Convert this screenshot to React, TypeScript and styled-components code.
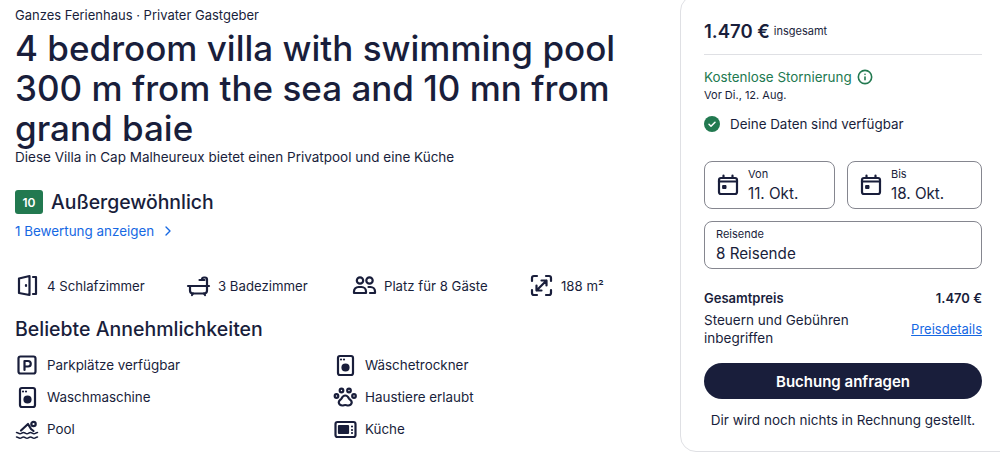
import React from "react";
import styled, { createGlobalStyle } from "styled-components";
import { ChevronRight, Info } from "lucide-react";

const ink = "#191e3b";
const green = "#227950";

const GlobalStyle = createGlobalStyle`
  html, body {
    margin: 0;
    background: #fff;
    overflow: hidden;
  }
  * { box-sizing: border-box; }
  body {
    font-family: "Inter", "Noto Sans", sans-serif;
    color: ${ink};
  }
`;

const Page = styled.div`
  width: 1000px;
  height: 455px;
  overflow: hidden;
  display: flex;
  align-items: flex-start;
`;

const Main = styled.main`
  width: 680px;
  flex: none;
  padding: 7px 40px 0 15px;
`;

const Eyebrow = styled.div`
  font-size: 13px;
  line-height: 17px;
`;

const Title = styled.h1`
  margin: 4px 0 0;
  font-size: 35px;
  line-height: 40px;
  font-weight: 500;
`;

const Lead = styled.p`
  margin: 1px 0 0;
  font-size: 13.5px;
  line-height: 17px;
`;

const RatingRow = styled.div`
  display: flex;
  align-items: center;
  gap: 8px;
  margin-top: 24px;
`;

const Badge = styled.span`
  width: 28px;
  height: 24px;
  border-radius: 3px;
  background: ${green};
  color: #fff;
  font-size: 12px;
  font-weight: 600;
  display: flex;
  align-items: center;
  justify-content: center;
`;

const RatingLabel = styled.span`
  font-size: 19.4px;
  font-weight: 500;
`;

const ReviewLink = styled.a`
  display: flex;
  align-items: center;
  gap: 6px;
  margin-top: 7px;
  height: 20px;
  font-size: 13.4px;
  color: #1668e3;
`;

const Facts = styled.div`
  display: flex;
  margin-top: 32px;
`;

const Fact = styled.div<{ $w: number }>`
  width: ${({ $w }) => $w}px;
  display: flex;
  align-items: center;
  gap: 7px;
  font-size: 13.2px;
`;

const SectionTitle = styled.h2`
  margin: 19px 0 0;
  font-size: 19.5px;
  line-height: 24px;
  font-weight: 500;
`;

const Amenities = styled.div`
  display: grid;
  grid-template-columns: 318px 1fr;
  grid-auto-rows: 32px;
  margin-top: 8px;
`;

const Amenity = styled.div`
  display: flex;
  align-items: center;
  gap: 7px;
  font-size: 13.4px;
`;

const IconSlot = styled.svg<{ $size?: number }>`
  width: ${({ $size }) => $size ?? 25}px;
  height: ${({ $size }) => $size ?? 25}px;
  flex: none;
  fill: none;
  stroke: ${ink};
  stroke-width: 2.2;
  stroke-linecap: round;
  stroke-linejoin: round;
`;

const Card = styled.aside`
  flex: none;
  width: 340px;
  height: 457px;
  margin-top: -5px;
  padding: 20px 37px 0 23px;
  border: 1px solid #dfe0e4;
  border-radius: 16px;
`;

const PriceRow = styled.div`
  display: flex;
  align-items: center;
  gap: 4px;
  height: 39px;
  padding-bottom: 8px;
  border-bottom: 1px solid #dfe0e4;
`;

const Price = styled.span`
  font-size: 18.5px;
  font-weight: 600;
`;

const PriceNote = styled.span`
  font-size: 11px;
`;

const Cancel = styled.div`
  display: flex;
  align-items: center;
  gap: 5px;
  margin-top: 13px;
  font-size: 13.4px;
  line-height: 18px;
  color: ${green};
`;

const CancelDate = styled.div`
  font-size: 11px;
  line-height: 18px;
`;

const Available = styled.div`
  display: flex;
  align-items: center;
  gap: 10px;
  margin-top: 11px;
  font-size: 13.4px;
  line-height: 18px;
`;

const DateRow = styled.div`
  display: flex;
  gap: 12px;
  margin-top: 28px;
`;

const Field = styled.div<{ $w?: number }>`
  width: ${({ $w }) => ($w ? `${$w}px` : "100%")};
  height: 48px;
  border: 1px solid #85868f;
  border-radius: 8px;
  display: flex;
  align-items: center;
  gap: 8px;
  padding: 0 11px;
`;

const FieldText = styled.div`
  display: flex;
  flex-direction: column;
  gap: 3px;
`;

const FieldLabel = styled.span`
  font-size: 11px;
  line-height: 14px;
`;

const FieldValue = styled.span`
  font-size: 15.2px;
  line-height: 20px;
`;

const Travelers = styled(Field)`
  margin-top: 12px;
`;

const TotalRow = styled.div`
  display: flex;
  justify-content: space-between;
  margin-top: 20px;
  font-size: 13px;
  line-height: 18px;
  font-weight: 600;
`;

const TaxRow = styled.div`
  display: flex;
  justify-content: space-between;
  align-items: center;
  margin-top: 4px;
  font-size: 13.5px;
  line-height: 18px;
`;

const Details = styled.a`
  color: #1668e3;
  text-decoration: underline;
  font-size: 13px;
`;

const Submit = styled.button`
  display: block;
  width: 100%;
  height: 36px;
  margin-top: 16px;
  border: 0;
  border-radius: 18px;
  background: ${ink};
  color: #fff;
  font: 600 15px "Inter", sans-serif;
`;

const Disclaimer = styled.p`
  margin: 12px 0 0;
  text-align: center;
  font-size: 13.5px;
  line-height: 18px;
`;

const Door = () => (
  <IconSlot viewBox="0 0 25 25">
    <path d="M4 5.500 14.500 3v19L4 20z" />
    <path d="M18 4h3v17h-3" />
    <path d="M11 12v1" />
  </IconSlot>
);

const Bath = () => (
  <IconSlot viewBox="0 0 25 25">
    <path d="M2 13h21" />
    <path d="M4 13v4.500a3 3 0 0 0 3 3h11a3 3 0 0 0 3-3V13" />
    <path d="M21 13V6.500a2 2 0 0 0-2-2h-1a2 2 0 0 0-2 2M13.500 7h5" />
    <path d="M7 20.500 6 22M18 20.500l1 1.500" />
  </IconSlot>
);

const People = () => (
  <IconSlot viewBox="0 0 25 25">
    <circle cx="8" cy="7.500" r="3.200" />
    <circle cx="17.500" cy="7.500" r="3.200" />
    <path d="M2 20v-1.500a4.500 4.500 0 0 1 4.500-4.500h3a4.500 4.500 0 0 1 4.500 4.500V20z" />
    <path d="M16.500 14h2a4.500 4.500 0 0 1 4.500 4.500V20h-5" />
  </IconSlot>
);

const Expand = () => (
  <IconSlot viewBox="0 0 25 25">
    <path d="M3 8V5a2 2 0 0 1 2-2h3M17 3h3a2 2 0 0 1 2 2v3M22 17v3a2 2 0 0 1-2 2h-3M8 22H5a2 2 0 0 1-2-2v-3" />
    <path d="M7.500 17.500 17.500 7.500M12.500 7.500h5v5M7.500 12.500v5h5" />
  </IconSlot>
);

const Parking = () => (
  <IconSlot viewBox="0 0 25 25">
    <rect x="3.500" y="3.500" width="17" height="17" rx="2" />
    <path d="M9.500 17V8h3.500a2.700 2.700 0 0 1 0 5.500H9.500" />
  </IconSlot>
);

const Washer = () => (
  <IconSlot viewBox="0 0 25 25">
    <rect x="5" y="3" width="15" height="19" rx="2" />
    <circle cx="12.500" cy="14.500" r="3" fill={ink} />
    <path d="M8 6.500h.01M11 6.500h.01" />
  </IconSlot>
);

const Paw = () => (
  <IconSlot viewBox="0 0 25 25">
    <circle cx="3.500" cy="11" r="1.800" />
    <circle cx="8.500" cy="5.500" r="1.800" />
    <circle cx="16" cy="5.500" r="1.800" />
    <circle cx="21" cy="11" r="1.800" />
    <path d="M12.250 10.500c-2 0-3 1.500-3.700 3-.7 1.200-2.800 1.800-2.800 3.800 0 2 1.800 3.200 3.500 3.200 1.200 0 2-.5 3-.5s1.800.5 3 .5c1.700 0 3.500-1.200 3.500-3.200 0-2-2.100-2.600-2.800-3.800-.7-1.500-1.700-3-3.700-3z" />
  </IconSlot>
);

const Swim = () => (
  <IconSlot viewBox="0 0 25 25">
    <circle cx="18.500" cy="7" r="2.200" />
    <path d="M6 13.500 13 7l3 5 2.500 2" />
    <path d="M1.500 15.500c1.800 0 1.800 1.300 3.500 1.300s1.800-1.300 3.500-1.300 1.800 1.300 3.500 1.300 1.800-1.300 3.500-1.300 1.800 1.300 3.500 1.300 1.800-1.300 3.500-1.300" strokeWidth="1.500" />
    <path d="M1.500 20c1.800 0 1.800 1.300 3.500 1.300S6.800 20 8.500 20s1.800 1.300 3.500 1.300 1.800-1.300 3.500-1.300 1.800 1.300 3.500 1.300 1.800-1.300 3.500-1.300" strokeWidth="1.500" />
  </IconSlot>
);

const Kitchen = () => (
  <IconSlot viewBox="0 0 25 25">
    <rect x="2.500" y="5" width="20" height="15" rx="2" />
    <rect x="6" y="9" width="9" height="7" fill={ink} />
    <path d="M19 9.500h.01M19 13h.01M19 16h.01" />
  </IconSlot>
);

const CalendarIcon = () => (
  <IconSlot viewBox="0 0 24 24" $size={24}>
    <rect x="3" y="5" width="18" height="16" rx="2" />
    <path d="M3 8.500h18" />
    <path d="M7.500 2.500V5M16.500 2.500V5" />
    <rect x="7" y="12.500" width="3" height="3" fill={ink} strokeWidth="1" />
  </IconSlot>
);

const CheckCircle = () => (
  <svg width="16" height="16" viewBox="0 0 16 16">
    <circle cx="8" cy="8" r="8" fill={green} />
    <path d="m5 8.200 2 2 4-4" fill="none" stroke="#fff" strokeWidth="1.500" strokeLinecap="round" strokeLinejoin="round" />
  </svg>
);

const facts = [
  { icon: <Door />, label: "4 Schlafzimmer", w: 171 },
  { icon: <Bath />, label: "3 Badezimmer", w: 166 },
  { icon: <People />, label: "Platz für 8 Gäste", w: 177 },
  { icon: <Expand />, label: "188 m²", w: 100 },
];

const amenities = [
  { icon: <Parking />, label: "Parkplätze verfügbar" },
  { icon: <Washer />, label: "Wäschetrockner" },
  { icon: <Washer />, label: "Waschmaschine" },
  { icon: <Paw />, label: "Haustiere erlaubt" },
  { icon: <Swim />, label: "Pool" },
  { icon: <Kitchen />, label: "Küche" },
];

export default function App() {
  return (
    <Page>
      <GlobalStyle />
      <Main>
        <Eyebrow>Ganzes Ferienhaus · Privater Gastgeber</Eyebrow>
        <Title>4 bedroom villa with swimming pool 300 m from the sea and 10 mn from grand baie</Title>
        <Lead>Diese Villa in Cap Malheureux bietet einen Privatpool und eine Küche</Lead>
        <RatingRow>
          <Badge>10</Badge>
          <RatingLabel>Außergewöhnlich</RatingLabel>
        </RatingRow>
        <ReviewLink>
          1 Bewertung anzeigen
          <ChevronRight size={16} />
        </ReviewLink>
        <Facts>
          {facts.map((f) => (
            <Fact key={f.label} $w={f.w}>
              {f.icon}
              {f.label}
            </Fact>
          ))}
        </Facts>
        <SectionTitle>Beliebte Annehmlichkeiten</SectionTitle>
        <Amenities>
          {amenities.map((a) => (
            <Amenity key={a.label}>
              {a.icon}
              {a.label}
            </Amenity>
          ))}
        </Amenities>
      </Main>
      <Card>
        <PriceRow>
          <Price>1.470 €</Price>
          <PriceNote>insgesamt</PriceNote>
        </PriceRow>
        <Cancel>
          Kostenlose Stornierung
          <Info size={16} strokeWidth={2.4} />
        </Cancel>
        <CancelDate>Vor Di., 12. Aug.</CancelDate>
        <Available>
          <CheckCircle />
          Deine Daten sind verfügbar
        </Available>
        <DateRow>
          <Field $w={131}>
            <CalendarIcon />
            <FieldText>
              <FieldLabel>Von</FieldLabel>
              <FieldValue>11. Okt.</FieldValue>
            </FieldText>
          </Field>
          <Field $w={135}>
            <CalendarIcon />
            <FieldText>
              <FieldLabel>Bis</FieldLabel>
              <FieldValue>18. Okt.</FieldValue>
            </FieldText>
          </Field>
        </DateRow>
        <Travelers>
          <FieldText>
            <FieldLabel>Reisende</FieldLabel>
            <FieldValue>8 Reisende</FieldValue>
          </FieldText>
        </Travelers>
        <TotalRow>
          <span>Gesamtpreis</span>
          <span>1.470 €</span>
        </TotalRow>
        <TaxRow>
          <span>
            Steuern und Gebühren
            <br />
            inbegriffen
          </span>
          <Details>Preisdetails</Details>
        </TaxRow>
        <Submit>Buchung anfragen</Submit>
        <Disclaimer>Dir wird noch nichts in Rechnung gestellt.</Disclaimer>
      </Card>
    </Page>
  );
}
